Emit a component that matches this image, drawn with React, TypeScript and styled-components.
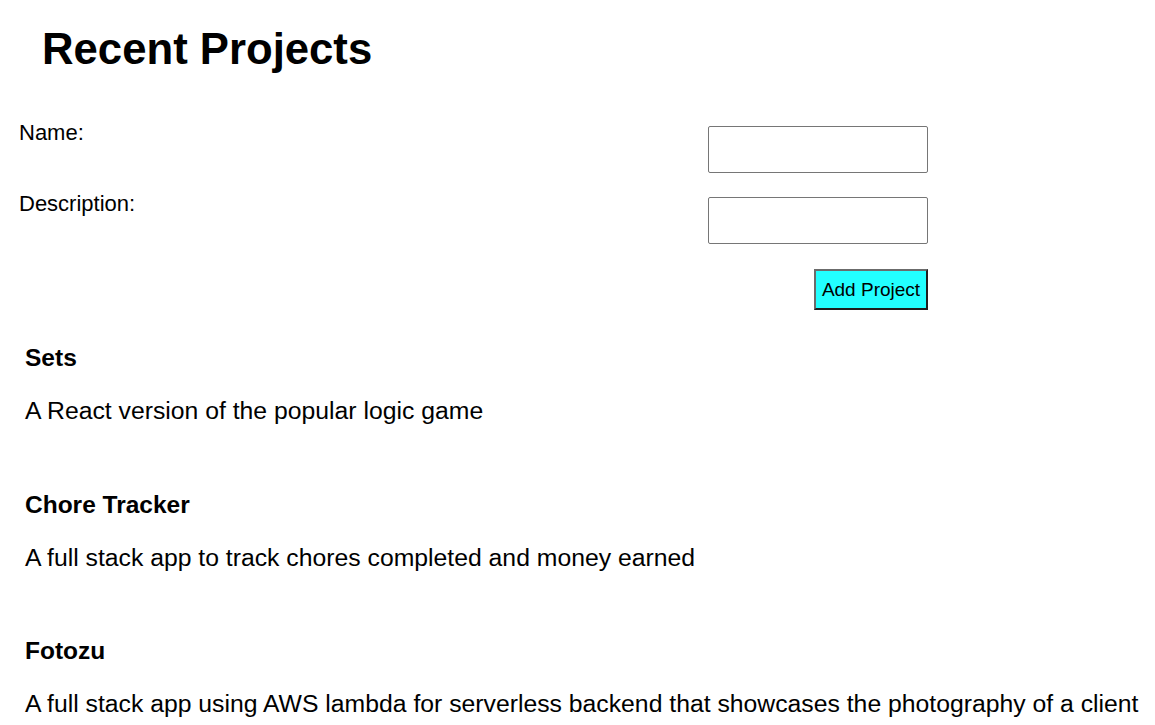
import React, { useState } from 'react';
import styled, { createGlobalStyle } from 'styled-components';

const GlobalStyle = createGlobalStyle`
    html, body {
        margin: 0;
        padding: 0;
        background: #fff;
        color: #000;
        font-family: "Liberation Sans", Arial, sans-serif;
    }
`;

const Page = styled.div`
    padding-top: 24px;
`;

const Heading = styled.h1`
    margin: 0 0 0 42px;
    font-size: 43.7px;
    line-height: 50px;
    font-weight: bold;
`;

const Form = styled.form`
    display: grid;
    grid-template-columns: 689px 220px;
    row-gap: 17px;
    margin: 45px 0 0 19px;
`;

const Label = styled.label`
    font-size: 22px;
    line-height: 26px;
    padding-top: 1px;
`;

const Input = styled.input`
    box-sizing: border-box;
    width: 220px;
    height: 47px;
    margin-top: 7px;
    border: 1px solid #767676;
    border-radius: 2px;
    background: #fff;
    font-family: inherit;
    font-size: 20px;
    padding: 0 8px;
`;

const ButtonCell = styled.div`
    grid-column: 2;
    display: flex;
    justify-content: flex-end;
    margin-top: 8px;
`;

const AddButton = styled.button`
    box-sizing: border-box;
    width: 114px;
    height: 41px;
    padding: 0;
    background: #22ffff;
    border: 2px solid;
    border-color: #6b6b6b #1e1e1e #1e1e1e #6b6b6b;
    font-family: "Liberation Sans", Arial, sans-serif;
    font-size: 19px;
    color: #000;
    cursor: pointer;
`;

const ProjectList = styled.div`
    margin: 34px 0 0 25px;
    display: flex;
    flex-direction: column;
    gap: 65.5px;
`;

const Project = styled.div`
    display: flex;
    flex-direction: column;
    gap: 25px;
`;

const ProjectName = styled.div`
    font-size: 24.5px;
    line-height: 28px;
    font-weight: bold;
`;

const ProjectDesc = styled.div`
    font-size: 24.75px;
    line-height: 28px;
    white-space: nowrap;
`;

interface ProjectItem {
    name: string;
    description: string;
}

const initialProjects: ProjectItem[] = [
    { name: 'Sets', description: 'A React version of the popular logic game' },
    { name: 'Chore Tracker', description: 'A full stack app to track chores completed and money earned' },
    {
        name: 'Fotozu',
        description: 'A full stack app using AWS lambda for serverless backend that showcases the photography of a client',
    },
];

export default function App() {
    const [projects, setProjects] = useState(initialProjects);
    const [name, setName] = useState('');
    const [description, setDescription] = useState('');

    const addProject = (e: React.FormEvent) => {
        e.preventDefault();
        if (!name) return;
        setProjects([...projects, { name, description }]);
        setName('');
        setDescription('');
    };

    return (
        <Page>
            <GlobalStyle />
            <Heading>Recent Projects</Heading>
            <Form onSubmit={addProject}>
                <Label htmlFor="name">Name:</Label>
                <Input id="name" value={name} onChange={e => setName(e.target.value)} />
                <Label htmlFor="description">Description:</Label>
                <Input id="description" value={description} onChange={e => setDescription(e.target.value)} />
                <ButtonCell>
                    <AddButton type="submit">Add Project</AddButton>
                </ButtonCell>
            </Form>
            <ProjectList>
                {projects.map(p => (
                    <Project key={p.name}>
                        <ProjectName>{p.name}</ProjectName>
                        <ProjectDesc>{p.description}</ProjectDesc>
                    </Project>
                ))}
            </ProjectList>
        </Page>
    );
}
